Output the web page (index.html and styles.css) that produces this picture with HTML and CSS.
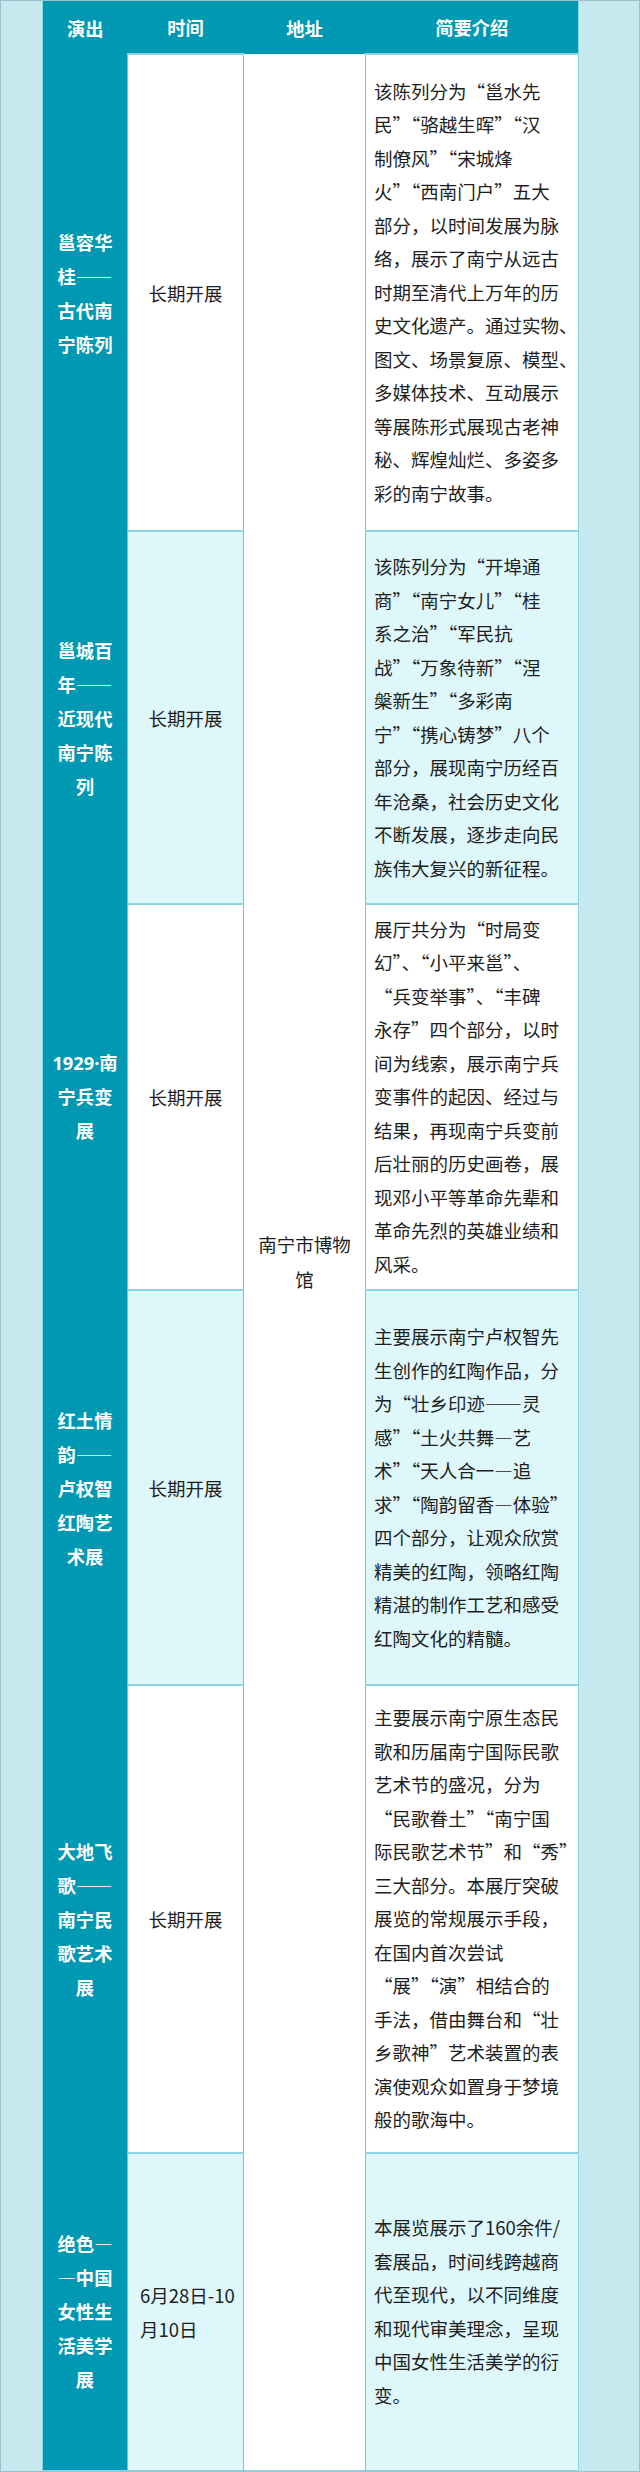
FILE: index.html
```html
<!DOCTYPE html>
<html lang="zh-CN">
<head>
<meta charset="utf-8">
<link rel="stylesheet" href="styles.css">
</head>
<body>
<div class="wrap">
<table class="expo">
<colgroup>
<col class="c-name"><col class="c-time"><col class="c-addr"><col class="c-desc">
</colgroup>
<thead>
<tr class="head"><th>演出</th><th>时间</th><th>地址</th><th>简要介绍</th></tr>
</thead>
<tbody>
<tr class="r1">
<td class="name">邕容华桂——古代南宁陈列</td>
<td class="time">长期开展</td>
<td class="addr" rowspan="6">南宁市博物馆</td>
<td class="desc">该陈列分为“邕水先<br>民”“骆越生晖”“汉<br>制僚风”“宋城烽<br>火”“西南门户”五大<br>部分，以时间发展为脉<br>络，展示了南宁从远古<br>时期至清代上万年的历<br>史文化遗产。通过实物、<br>图文、场景复原、模型、<br>多媒体技术、互动展示<br>等展陈形式展现古老神<br>秘、辉煌灿烂、多姿多<br>彩的南宁故事。</td>
</tr>
<tr class="r2 alt">
<td class="name">邕城百年——近现代南宁陈列</td>
<td class="time">长期开展</td>
<td class="desc">该陈列分为“开埠通<br>商”“南宁女儿”“桂<br>系之治”“军民抗<br>战”“万象待新”“涅<br>槃新生”“多彩南<br>宁”“携心铸梦”八个<br>部分，展现南宁历经百<br>年沧桑，社会历史文化<br>不断发展，逐步走向民<br>族伟大复兴的新征程。</td>
</tr>
<tr class="r3">
<td class="name latin">1929·南宁兵变展</td>
<td class="time">长期开展</td>
<td class="desc">展厅共分为“时局变<br>幻”、“小平来邕”、<br>“兵变举事”、“丰碑<br>永存”四个部分，以时<br>间为线索，展示南宁兵<br>变事件的起因、经过与<br>结果，再现南宁兵变前<br>后壮丽的历史画卷，展<br>现邓小平等革命先辈和<br>革命先烈的英雄业绩和<br>风采。</td>
</tr>
<tr class="r4 alt">
<td class="name">红土情韵——卢权智红陶艺术展</td>
<td class="time">长期开展</td>
<td class="desc">主要展示南宁卢权智先<br>生创作的红陶作品，分<br>为“壮乡印迹——灵<br>感”“土火共舞—艺<br>术”“天人合一—追<br>求”“陶韵留香—体验”<br>四个部分，让观众欣赏<br>精美的红陶，领略红陶<br>精湛的制作工艺和感受<br>红陶文化的精髓。</td>
</tr>
<tr class="r5">
<td class="name">大地飞歌——南宁民歌艺术展</td>
<td class="time">长期开展</td>
<td class="desc">主要展示南宁原生态民<br>歌和历届南宁国际民歌<br>艺术节的盛况，分为<br>“民歌眷土”“南宁国<br>际民歌艺术节”和“秀”<br>三大部分。本展厅突破<br>展览的常规展示手段，<br>在国内首次尝试<br>“展”“演”相结合的<br>手法，借由舞台和“壮<br>乡歌神”艺术装置的表<br>演使观众如置身于梦境<br>般的歌海中。</td>
</tr>
<tr class="r6 alt">
<td class="name">绝色——中国女性生活美学展</td>
<td class="time date">6月28日-10月10日</td>
<td class="desc">本展览展示了160余件/<br>套展品，时间线跨越商<br>代至现代，以不同维度<br>和现代审美理念，呈现<br>中国女性生活美学的衍<br>变。</td>
</tr>
</tbody>
</table>
</div>
</body>
</html>
```
FILE: styles.css
```css
html, body {
  margin: 0;
  padding: 0;
}
body {
  background: #c6e8ef;
  border: 1px solid #9fc3ca;
  height: 2470px;
  font-family: "Noto Sans CJK SC", "Noto Sans", sans-serif;
  color: #1e1e1e;
}
.wrap {
  padding-left: 41px;
}
.expo {
  border-collapse: collapse;
  table-layout: fixed;
  width: 536px;
  border: 1px solid #8fd6e4;
  border-top: 0;
}
.c-name { width: 85px; }
.c-time { width: 116px; }
.c-addr { width: 122px; }
.c-desc { width: 213px; }

.head th {
  background: #0098b2;
  color: #fff;
  font-weight: 700;
  font-size: 18.3px;
  height: 52px;
  padding: 0;
  text-align: center;
  border: 0;
}
td {
  padding: 0;
  vertical-align: middle;
  font-size: 18.5px;
}
td.name {
  background: #0098b2;
  color: #fff;
  font-weight: 700;
  font-size: 18.3px;
  line-height: 34px;
  padding: 0 8px;
  text-align: center;
  line-break: anywhere;
  border: 0;
}
td.name.latin {
  font-family: "Noto Sans", "Noto Sans CJK SC", sans-serif;
}
td.time {
  background: #fff;
  text-align: center;
  line-height: 34px;
  padding: 0 10px;
  border-top: 2px solid #8fd6e4;
  border-left: 1px solid #6fc6da;
  border-right: 1px solid #6fc6da;
}
td.time.date {
  text-align: left;
  padding: 0 6px 0 12px;
}
td.addr {
  background: #fff;
  text-align: center;
  line-height: 35px;
  padding: 0 8px;
  border-left: 1px solid #6fc6da;
  border-right: 1px solid #6fc6da;
}
td.desc {
  background: #fff;
  text-align: left;
  line-height: 33.5px;
  padding: 0 0 0 8px;
  white-space: nowrap;
  border-top: 2px solid #8fd6e4;
}
.alt td.time,
.alt td.desc {
  background: #ddf7fb;
}
.r1 { height: 477px; }
.r2 { height: 373px; }
.r3 { height: 386px; }
.r4 { height: 395px; }
.r5 { height: 468px; }
.r6 { height: 317px; }
```
